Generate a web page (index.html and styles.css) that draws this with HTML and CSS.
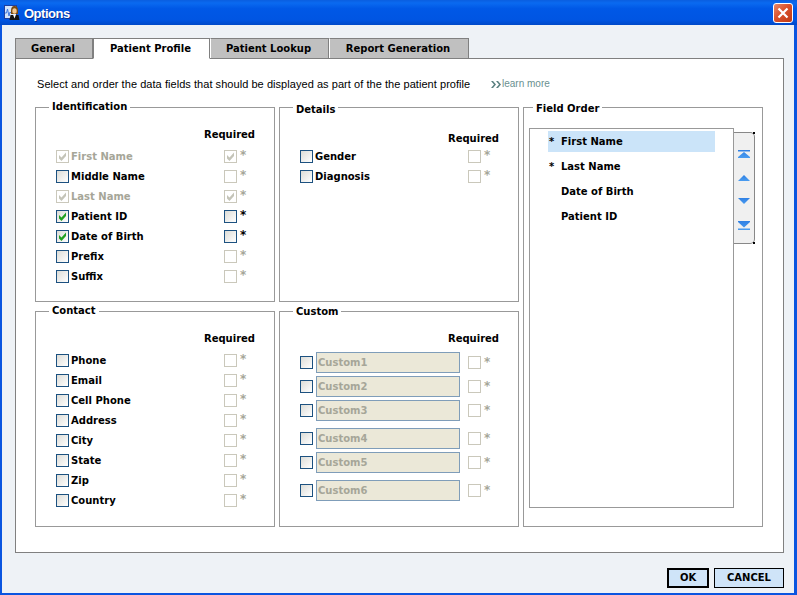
FILE: index.html
```html
<!DOCTYPE html>
<html lang="en">
<head>
<meta charset="UTF-8">
<title>Options</title>
<link rel="stylesheet" href="styles.css">
</head>
<body>

<svg class="defs" width="0" height="0">
  <defs>
    <linearGradient id="arrowFill" x1="0" y1="0" x2="0" y2="1">
      <stop offset="0" stop-color="#2f80e4"/>
      <stop offset="1" stop-color="#4a9cf0"/>
    </linearGradient>
  </defs>
  <symbol id="tick" viewBox="0 0 11 11">
    <path d="M2 4 L4.500 6.500 L9 1.500 L9 5 L4.500 10 L2 7.500 Z"/>
  </symbol>
</svg>

<div class="window">
  <div class="titlebar">
    <svg class="app-icon" width="16" height="16" viewBox="0 0 16 16">
      <rect x="0.500" y="0.500" width="12" height="13" fill="#d4e4fa" stroke="#1e3fa0"/>
      <path d="M1 8 L2.500 8 L3.500 4 L5 11 L6 7 L7 8" fill="none" stroke="#3f78e0"/>
      <path d="M7 6 C7 2 8.500 1 10.500 1 C12.500 1 14 2 14 6 L14 9 L7 9 Z" fill="#7a4a10"/>
      <ellipse cx="10.500" cy="6" rx="2.200" ry="2.800" fill="#f2c890"/>
      <path d="M5.500 15 L6.500 10 L14.500 10 L15.500 15 Z" fill="#141414"/>
      <path d="M9 9.500 L12 9.500 L10.500 13.500 Z" fill="#fff"/>
    </svg>
    <span class="title">Options</span>
    <div class="close-btn">
      <svg width="12" height="12" viewBox="0 0 12 12">
        <path d="M1.500 1.500 L10.500 10.500 M10.500 1.500 L1.500 10.500" stroke="#fff" stroke-width="2.200"/>
      </svg>
    </div>
  </div>

  <div class="content">
    <div class="tabs">
      <div class="tab tab-general">General</div>
      <div class="tab tab-profile active">Patient Profile</div>
      <div class="tab tab-lookup">Patient Lookup</div>
      <div class="tab tab-report">Report Generation</div>
    </div>

    <div class="panel">
      <div class="intro">
        <span class="intro-text">Select and order the data fields that should be displayed as part of the the patient profile</span>
        <span class="learn-more">
          <svg width="10" height="7" viewBox="0 0 10 7"><path d="M0 0 H2 L5 3.500 L2 7 H0 L3 3.500 Z M5 0 H7 L10 3.500 L7 7 H5 L8 3.500 Z"/></svg>
          learn more
        </span>
      </div>

      <div class="groups">
        <!-- Identification -->
        <fieldset class="group">
          <legend>Identification</legend>
          <div class="req-head">Required</div>
          <div class="row off"><span class="cb"><svg><use href="#tick"/></svg></span><span class="name">First Name</span><span class="cb"><svg><use href="#tick"/></svg></span><span class="star">*</span></div>
          <div class="row"><span class="cb"></span><span class="name">Middle Name</span><span class="cb dim"></span><span class="star dim">*</span></div>
          <div class="row off"><span class="cb"><svg><use href="#tick"/></svg></span><span class="name">Last Name</span><span class="cb"><svg><use href="#tick"/></svg></span><span class="star">*</span></div>
          <div class="row"><span class="cb"><svg><use href="#tick"/></svg></span><span class="name">Patient ID</span><span class="cb"></span><span class="star">*</span></div>
          <div class="row"><span class="cb"><svg><use href="#tick"/></svg></span><span class="name">Date of Birth</span><span class="cb"></span><span class="star">*</span></div>
          <div class="row"><span class="cb"></span><span class="name">Prefix</span><span class="cb dim"></span><span class="star dim">*</span></div>
          <div class="row"><span class="cb"></span><span class="name">Suffix</span><span class="cb dim"></span><span class="star dim">*</span></div>
        </fieldset>

        <!-- Details -->
        <fieldset class="group group-details">
          <legend>Details</legend>
          <div class="req-head">Required</div>
          <div class="row"><span class="cb"></span><span class="name">Gender</span><span class="cb dim"></span><span class="star dim">*</span></div>
          <div class="row"><span class="cb"></span><span class="name">Diagnosis</span><span class="cb dim"></span><span class="star dim">*</span></div>
        </fieldset>

        <!-- Field order -->
        <fieldset class="group group-order">
          <legend>Field Order</legend>
          <div class="order-wrap">
            <div class="order-list">
              <div class="order-item selected"><span class="order-star">*</span>First Name</div>
              <div class="order-item"><span class="order-star">*</span>Last Name</div>
              <div class="order-item"><span class="order-star"></span>Date of Birth</div>
              <div class="order-item"><span class="order-star"></span>Patient ID</div>
            </div>
            <div class="order-tools">
              <svg width="12" height="8" viewBox="0 0 12 8"><path class="arrow" d="M0 0 H12 V1.500 H0 Z M6 2 L12 7 V8 H0 V7 Z"/></svg>
              <svg width="12" height="6" viewBox="0 0 12 6"><path class="arrow" d="M6 0 L12 6 H0 Z"/></svg>
              <svg width="12" height="6" viewBox="0 0 12 6"><path class="arrow" d="M0 0 H12 L6 6 Z"/></svg>
              <svg width="12" height="9" viewBox="0 0 12 9"><path class="arrow" d="M0 0 H12 V1 L6 6.500 L0 1 Z M0 7.500 H12 V9 H0 Z"/></svg>
            </div>
          </div>
        </fieldset>

        <!-- Contact -->
        <fieldset class="group">
          <legend>Contact</legend>
          <div class="req-head">Required</div>
          <div class="row"><span class="cb"></span><span class="name">Phone</span><span class="cb dim"></span><span class="star dim">*</span></div>
          <div class="row"><span class="cb"></span><span class="name">Email</span><span class="cb dim"></span><span class="star dim">*</span></div>
          <div class="row"><span class="cb"></span><span class="name">Cell Phone</span><span class="cb dim"></span><span class="star dim">*</span></div>
          <div class="row"><span class="cb"></span><span class="name">Address</span><span class="cb dim"></span><span class="star dim">*</span></div>
          <div class="row"><span class="cb"></span><span class="name">City</span><span class="cb dim"></span><span class="star dim">*</span></div>
          <div class="row"><span class="cb"></span><span class="name">State</span><span class="cb dim"></span><span class="star dim">*</span></div>
          <div class="row"><span class="cb"></span><span class="name">Zip</span><span class="cb dim"></span><span class="star dim">*</span></div>
          <div class="row"><span class="cb"></span><span class="name">Country</span><span class="cb dim"></span><span class="star dim">*</span></div>
        </fieldset>

        <!-- Custom -->
        <fieldset class="group group-custom">
          <legend>Custom</legend>
          <div class="req-head">Required</div>
          <div class="row custom-row"><span class="cb"></span><span class="field">Custom1</span><span class="cb dim"></span><span class="star dim">*</span></div>
          <div class="row custom-row"><span class="cb"></span><span class="field">Custom2</span><span class="cb dim"></span><span class="star dim">*</span></div>
          <div class="row custom-row gap-after"><span class="cb"></span><span class="field">Custom3</span><span class="cb dim"></span><span class="star dim">*</span></div>
          <div class="row custom-row"><span class="cb"></span><span class="field">Custom4</span><span class="cb dim"></span><span class="star dim">*</span></div>
          <div class="row custom-row gap-after"><span class="cb"></span><span class="field">Custom5</span><span class="cb dim"></span><span class="star dim">*</span></div>
          <div class="row custom-row"><span class="cb"></span><span class="field">Custom6</span><span class="cb dim"></span><span class="star dim">*</span></div>
        </fieldset>
      </div>
    </div>

    <div class="footer">
      <div class="btn btn-ok">OK</div>
      <div class="btn">CANCEL</div>
    </div>
  </div>
</div>

</body>
</html>
```

FILE: styles.css
```css
html, body {
  margin: 0;
  padding: 0;
}
body {
  font-family: "DejaVu Sans", Verdana, sans-serif;
  font-size: 10px;
  color: #000;
  background: #eef2f6;
}
.defs {
  position: absolute;
}

.window {
  width: 797px;
  height: 595px;
  box-sizing: border-box;
  display: flex;
  flex-direction: column;
  overflow: hidden;
}

/* title bar */
.titlebar {
  height: 25px;
  flex: none;
  display: flex;
  align-items: center;
  padding: 0 4px 0 4px;
  background: linear-gradient(#0a5ee0 0%, #0a6af0 12%, #0058e6 35%, #0055e2 80%, #0049c8 100%);
}
.app-icon {
  flex: none;
}
.title {
  margin-left: 4px;
  padding-top: 1px;
  color: #fff;
  font-family: "Liberation Sans", Arial, sans-serif;
  font-size: 13px;
  font-weight: bold;
  letter-spacing: -0.5px;
  text-shadow: 1px 1px 0 #0a2f90;
  flex: 1;
}
.close-btn {
  width: 20px;
  height: 20px;
  box-sizing: border-box;
  border: 1px solid #fff;
  border-radius: 3px;
  background: linear-gradient(135deg, #e8886a, #d9512c 45%, #c03a14);
  display: flex;
  align-items: center;
  justify-content: center;
}

/* main */
.content {
  flex: 1;
  display: flex;
  flex-direction: column;
  padding: 13px 13px 0 15px;
  box-shadow: inset 2px 0 0 #0a55e0, inset -3px 0 0 #0a55e0, inset 0 -2px 0 #0a55e0;
}

.tabs {
  display: flex;
  height: 20px;
  flex: none;
}
.tab {
  box-sizing: border-box;
  height: 21px;
  border: 1px solid #808080;
  border-left: 1px solid #fff;
  padding-right: 2px;
  background: #c0c0c0;
  font-weight: bold;
  text-align: center;
  line-height: 19px;
}
.tab-general { width: 78px; border-left-color: #808080; }
.tab-profile { width: 117px; }
.tab-lookup { width: 119px; }
.tab-report { width: 140px; }
.tab.active {
  background: #fff;
  border-bottom-color: #fff;
  border-left-color: #808080;
  position: relative;
  z-index: 1;
}

.panel {
  box-sizing: border-box;
  height: 495px;
  width: 769px;
  flex: none;
  background: #fff;
  border: 1px solid #808080;
  padding: 18px 19px 0;
}
.intro {
  display: flex;
  height: 14px;
  line-height: 14px;
  padding-left: 2px;
  margin-bottom: 9px;
}
.intro-text {
  width: 454px;
  font-family: "Liberation Sans", Arial, sans-serif;
  font-size: 11px;
  letter-spacing: 0.05px;
}
.learn-more {
  display: flex;
  align-items: center;
  gap: 1px;
  font-family: "Liberation Sans", Arial, sans-serif;
  font-size: 10px;
  color: #6a9090;
  fill: #5a8080;
}

.groups {
  display: grid;
  grid-template-columns: 240px 240px 240px;
  grid-template-rows: 202px 223px;
  column-gap: 4px;
  row-gap: 2px;
}
.group {
  margin: 0;
  min-width: 0;
  box-sizing: border-box;
  border: 1px solid #999;
  padding: 14px 19px 0 20px;
}
.group legend {
  margin-left: -7px;
  padding: 0 3px;
  font-weight: bold;
  line-height: 14px;
}
.req-head {
  height: 14px;
  line-height: 14px;
  margin-bottom: 4px;
  font-weight: bold;
  text-align: right;
}
.group-details { padding-top: 18px; }
.group-details .req-head { margin-bottom: 0; }
.group-custom .req-head { margin-bottom: 6px; }

/* the group titles do not sit on one line in the original */
.group-details legend { position: relative; top: 3px; }
.group-order legend { position: relative; top: 2px; }
.group-custom legend { position: relative; top: 1px; }

.row {
  display: flex;
  align-items: center;
  height: 20px;
  font-weight: bold;
}
.name {
  width: 153px;
  margin-left: 2px;
}
.row.off .name,
.row.off .star,
.star.dim {
  color: #a6a698;
}
.star {
  margin-left: 3px;
  margin-top: -2px;
  font-size: 12px;
}

/* checkbox */
.cb {
  flex: none;
  width: 13px;
  height: 13px;
  box-sizing: border-box;
  border: 1px solid #1c5180;
  background: linear-gradient(135deg, #dcdcd7, #fff);
  fill: #21a121;
}
.cb svg {
  display: block;
  width: 11px;
  height: 11px;
}
.cb.dim,
.row.off .cb {
  border-color: #cac8bb;
  background: #fff;
  fill: #c4c4b8;
}

/* custom field rows */
.custom-row {
  height: 21px;
  margin-bottom: 3px;
}
.custom-row.gap-after {
  margin-bottom: 7px;
}
.field {
  box-sizing: border-box;
  width: 144px;
  height: 21px;
  margin: 0 8px 0 3px;
  border: 1px solid #7f9db9;
  background: #ebe8d8;
  color: #a6a698;
  line-height: 19px;
  padding-left: 1px;
}

/* field order */
.group-order {
  grid-column: 3;
  grid-row: 1 / span 2;
  padding: 14px 0 0 5px;
}
.group-order legend {
  margin-left: 4px;
}
.order-wrap {
  display: flex;
  align-items: flex-start;
}
.order-list {
  box-sizing: border-box;
  width: 205px;
  height: 380px;
  border: 1px solid #999;
  padding: 2px 18px;
  font-weight: bold;
}
.order-item {
  height: 21px;
  line-height: 21px;
  margin-bottom: 4px;
  padding-left: 1px;
}
.order-item.selected {
  background: #cbe4f9;
}
.order-star {
  display: inline-block;
  width: 12px;
}
.order-tools {
  box-sizing: border-box;
  position: relative;
  width: 21px;
  height: 112px;
  margin-top: 4px;
  background: #f0f0f0;
  border: 1px solid #888;
  border-left: 0;
  border-radius: 0 5px 5px 0;
  display: flex;
  flex-direction: column;
  align-items: center;
  padding-top: 17px;
  gap: 17px;
}
.order-tools::before,
.order-tools::after {
  content: "";
  position: absolute;
  right: -1px;
  width: 2px;
  height: 2px;
  background: #000;
}
.order-tools::before { top: -1px; }
.order-tools::after { bottom: -1px; }
.order-tools svg {
  flex: none;
}
.arrow {
  fill: url(#arrowFill);
}

/* buttons */
.footer {
  display: flex;
  justify-content: flex-end;
  gap: 5px;
  margin-top: 15px;
  width: 769px;
}
.btn {
  box-sizing: border-box;
  height: 20px;
  width: 70px;
  border: 1px solid #000;
  background: #cfe4f8;
  font-weight: bold;
  text-align: center;
  line-height: 18px;
}
.btn-ok {
  width: 42px;
  border-width: 2px;
  line-height: 16px;
}
```
